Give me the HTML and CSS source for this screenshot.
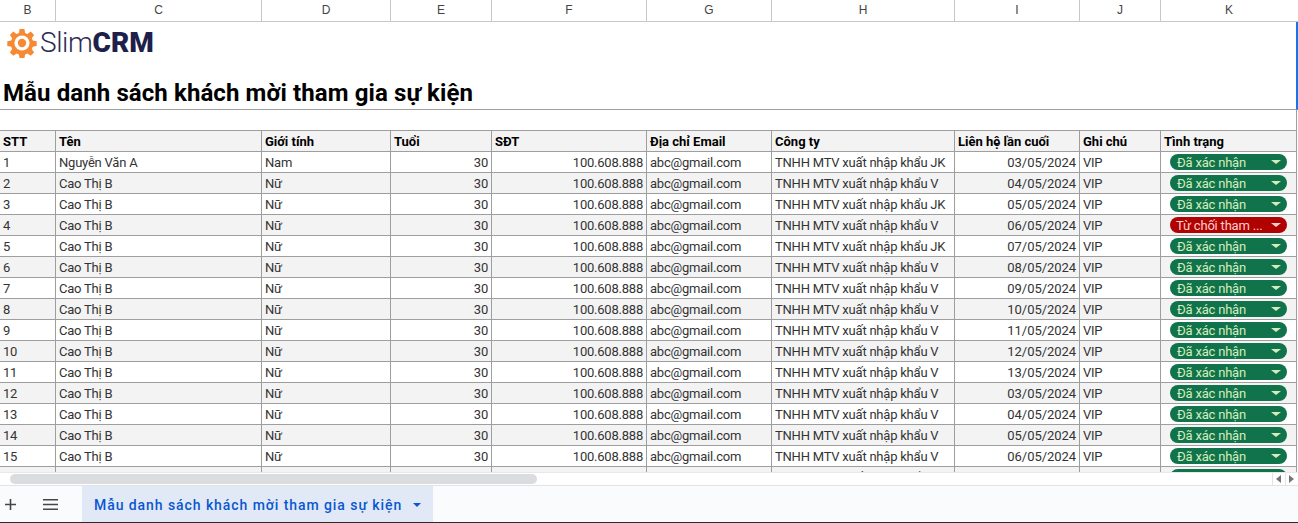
FILE: index.html
```html
<!DOCTYPE html>
<html lang="vi">
<head>
<meta charset="utf-8">
<title>Mẫu danh sách khách mời tham gia sự kiện</title>
<link rel="stylesheet" href="styles.css">
</head>
<body>
<div class="sheet">
  <div class="cols grid-row">
    <div>B</div><div>C</div><div>D</div><div>E</div><div>F</div><div>G</div><div>H</div><div>I</div><div>J</div><div>K</div>
  </div>
  <div class="body">
    <div class="banner">
      <div class="logo">
        <svg class="gear" width="30" height="30" viewBox="0 0 30 30"><path fill="#f58a33" d="M12.600 1h4.800l.7 3.900 2.300 1 3.300-2.300 3.400 3.400-2.300 3.300 1 2.300 3.900.7v4.800l-3.900.7-1 2.300 2.300 3.300-3.400 3.400-3.300-2.300-2.300 1-.7 3.900h-4.800l-.7-3.900-2.300-1-3.300 2.300-3.400-3.400 2.300-3.300-1-2.300-3.900-.7v-4.800l3.900-.7 1-2.300-2.300-3.300 3.400-3.400 3.300 2.300 2.300-1z"/><circle cx="15" cy="15" r="7.600" fill="#fff"/><circle cx="15" cy="15" r="4.200" fill="#f58a33"/></svg>
        <span class="brand">Slim<b>CRM</b></span>
      </div>
      <h1>Mẫu danh sách khách mời tham gia sự kiện</h1>
    </div>
    <div class="blank"></div>
    <div class="grid-row head">
      <div>STT</div><div>Tên</div><div>Giới tính</div><div>Tuổi</div><div>SĐT</div><div>Địa chỉ Email</div><div>Công ty</div><div>Liên hệ lần cuối</div><div>Ghi chú</div><div>Tình trạng</div>
    </div>
    <div class="grid-row data"><div>1</div><div>Nguyễn Văn A</div><div>Nam</div><div class="r">30</div><div class="r">100.608.888</div><div>abc@gmail.com</div><div>TNHH MTV xuất nhập khẩu JK</div><div class="r d">03/05/2024</div><div>VIP</div><div class="c"><span class="chip ok"><span class="lbl">Đã xác nhận</span><i></i></span></div></div>
    <div class="grid-row data"><div>2</div><div>Cao Thị B</div><div>Nữ</div><div class="r">30</div><div class="r">100.608.888</div><div>abc@gmail.com</div><div>TNHH MTV xuất nhập khẩu V</div><div class="r d">04/05/2024</div><div>VIP</div><div class="c"><span class="chip ok"><span class="lbl">Đã xác nhận</span><i></i></span></div></div>
    <div class="grid-row data"><div>3</div><div>Cao Thị B</div><div>Nữ</div><div class="r">30</div><div class="r">100.608.888</div><div>abc@gmail.com</div><div>TNHH MTV xuất nhập khẩu JK</div><div class="r d">05/05/2024</div><div>VIP</div><div class="c"><span class="chip ok"><span class="lbl">Đã xác nhận</span><i></i></span></div></div>
    <div class="grid-row data"><div>4</div><div>Cao Thị B</div><div>Nữ</div><div class="r">30</div><div class="r">100.608.888</div><div>abc@gmail.com</div><div>TNHH MTV xuất nhập khẩu V</div><div class="r d">06/05/2024</div><div>VIP</div><div class="c"><span class="chip no"><span class="lbl">Từ chối tham ...</span><i></i></span></div></div>
    <div class="grid-row data"><div>5</div><div>Cao Thị B</div><div>Nữ</div><div class="r">30</div><div class="r">100.608.888</div><div>abc@gmail.com</div><div>TNHH MTV xuất nhập khẩu JK</div><div class="r d">07/05/2024</div><div>VIP</div><div class="c"><span class="chip ok"><span class="lbl">Đã xác nhận</span><i></i></span></div></div>
    <div class="grid-row data"><div>6</div><div>Cao Thị B</div><div>Nữ</div><div class="r">30</div><div class="r">100.608.888</div><div>abc@gmail.com</div><div>TNHH MTV xuất nhập khẩu V</div><div class="r d">08/05/2024</div><div>VIP</div><div class="c"><span class="chip ok"><span class="lbl">Đã xác nhận</span><i></i></span></div></div>
    <div class="grid-row data"><div>7</div><div>Cao Thị B</div><div>Nữ</div><div class="r">30</div><div class="r">100.608.888</div><div>abc@gmail.com</div><div>TNHH MTV xuất nhập khẩu V</div><div class="r d">09/05/2024</div><div>VIP</div><div class="c"><span class="chip ok"><span class="lbl">Đã xác nhận</span><i></i></span></div></div>
    <div class="grid-row data"><div>8</div><div>Cao Thị B</div><div>Nữ</div><div class="r">30</div><div class="r">100.608.888</div><div>abc@gmail.com</div><div>TNHH MTV xuất nhập khẩu V</div><div class="r d">10/05/2024</div><div>VIP</div><div class="c"><span class="chip ok"><span class="lbl">Đã xác nhận</span><i></i></span></div></div>
    <div class="grid-row data"><div>9</div><div>Cao Thị B</div><div>Nữ</div><div class="r">30</div><div class="r">100.608.888</div><div>abc@gmail.com</div><div>TNHH MTV xuất nhập khẩu V</div><div class="r d">11/05/2024</div><div>VIP</div><div class="c"><span class="chip ok"><span class="lbl">Đã xác nhận</span><i></i></span></div></div>
    <div class="grid-row data"><div>10</div><div>Cao Thị B</div><div>Nữ</div><div class="r">30</div><div class="r">100.608.888</div><div>abc@gmail.com</div><div>TNHH MTV xuất nhập khẩu V</div><div class="r d">12/05/2024</div><div>VIP</div><div class="c"><span class="chip ok"><span class="lbl">Đã xác nhận</span><i></i></span></div></div>
    <div class="grid-row data"><div>11</div><div>Cao Thị B</div><div>Nữ</div><div class="r">30</div><div class="r">100.608.888</div><div>abc@gmail.com</div><div>TNHH MTV xuất nhập khẩu V</div><div class="r d">13/05/2024</div><div>VIP</div><div class="c"><span class="chip ok"><span class="lbl">Đã xác nhận</span><i></i></span></div></div>
    <div class="grid-row data"><div>12</div><div>Cao Thị B</div><div>Nữ</div><div class="r">30</div><div class="r">100.608.888</div><div>abc@gmail.com</div><div>TNHH MTV xuất nhập khẩu V</div><div class="r d">03/05/2024</div><div>VIP</div><div class="c"><span class="chip ok"><span class="lbl">Đã xác nhận</span><i></i></span></div></div>
    <div class="grid-row data"><div>13</div><div>Cao Thị B</div><div>Nữ</div><div class="r">30</div><div class="r">100.608.888</div><div>abc@gmail.com</div><div>TNHH MTV xuất nhập khẩu V</div><div class="r d">04/05/2024</div><div>VIP</div><div class="c"><span class="chip ok"><span class="lbl">Đã xác nhận</span><i></i></span></div></div>
    <div class="grid-row data"><div>14</div><div>Cao Thị B</div><div>Nữ</div><div class="r">30</div><div class="r">100.608.888</div><div>abc@gmail.com</div><div>TNHH MTV xuất nhập khẩu V</div><div class="r d">05/05/2024</div><div>VIP</div><div class="c"><span class="chip ok"><span class="lbl">Đã xác nhận</span><i></i></span></div></div>
    <div class="grid-row data"><div>15</div><div>Cao Thị B</div><div>Nữ</div><div class="r">30</div><div class="r">100.608.888</div><div>abc@gmail.com</div><div>TNHH MTV xuất nhập khẩu V</div><div class="r d">06/05/2024</div><div>VIP</div><div class="c"><span class="chip ok"><span class="lbl">Đã xác nhận</span><i></i></span></div></div>
    <div class="grid-row data"><div>16</div><div>Cao Thị B</div><div>Nữ</div><div class="r">30</div><div class="r">100.608.888</div><div>abc@gmail.com</div><div>TNHH MTV xuất nhập khẩu V</div><div class="r d">07/05/2024</div><div>VIP</div><div class="c"><span class="chip ok"><span class="lbl">Đã xác nhận</span><i></i></span></div></div>
  </div>
  <div class="hscroll">
    <div class="thumb"></div>
    <div class="arrows">
      <span class="arr"><svg width="6" height="8" viewBox="0 0 6 8"><path fill="#757575" d="M5 0v8L0 4z"/></svg></span>
      <span class="arr"><svg width="6" height="8" viewBox="0 0 6 8"><path fill="#757575" d="M0 0v8l5-4z"/></svg></span>
    </div>
  </div>
  <div class="tabs">
    <span class="plus"><svg width="11" height="11" viewBox="0 0 11 11"><path fill="#444746" d="M4.700 0h1.600v4.700H11v1.600H6.300V11H4.700V6.300H0V4.700h4.700z"/></svg></span>
    <span class="menu"><svg width="15" height="11" viewBox="0 0 15 11"><path fill="#444746" d="M0 0h15v1.500H0zM0 4.700h15v1.500H0zM0 9.400h15v1.500H0z"/></svg></span>
    <div class="tab"><span>Mẫu danh sách khách mời tham gia sự kiện</span><svg width="8" height="4" viewBox="0 0 8 4"><path fill="#0b57d0" d="M0 0h8L4 4z"/></svg></div>
  </div>
</div>
</body>
</html>
```
FILE: styles.css
```css
* { box-sizing: border-box; }
html, body { margin: 0; height: 100%; overflow: hidden; background: #fff; }
body { font-family: Roboto, "Liberation Sans", sans-serif; color: #333; }
.sheet { display: flex; flex-direction: column; width: 1298px; height: 523px; }
.grid-row {
  display: grid;
  grid-template-columns: 56px 206px 129px 101px 155px 125px 183px 125px 81px 136px;
  flex: none;
}
.cols { height: 22px; border-bottom: 1px solid #c7c7c7; color: #444; font: 12px/20px "Liberation Sans", sans-serif; text-align: center; }
.cols > div { border-right: 1px solid #c7c7c7; height: 21px; }
.cols > div:last-child { border-right: 0; }
.body { flex: none; height: 450px; overflow: hidden; }
.banner {
  height: 88px; border-bottom: 1px solid #9e9e9e; border-right: 2px solid #1a73e8;
  display: flex; flex-direction: column; justify-content: space-between;
}
.logo { display: flex; align-items: center; gap: 3px; padding: 6px 0 0 7px; height: 36px; }
.gear { flex: none; }
.brand { font-size: 28px; line-height: 30px; font-weight: 300; color: #2b2c55; letter-spacing: -.4px; }
.brand b { font-weight: 900; color: #1e1f4b; letter-spacing: .1px; }
h1 { margin: 0; padding: 0 0 0 3px; font-size: 24px; line-height: 32px; font-weight: 700; letter-spacing: .1px; color: #000; white-space: nowrap; }
.blank { height: 21px; width: 1297px; border-bottom: 1px solid #9e9e9e; border-right: 1px solid #9e9e9e; }
.head > div, .data > div {
  height: 21px; border-right: 1px solid #9e9e9e; border-bottom: 1px solid #9e9e9e;
  padding: 0 3px; font-size: 13px; line-height: 22px; white-space: nowrap; overflow: hidden;
  letter-spacing: -.22px;
}
.head > div { background: #f3f3f3; font-weight: 700; color: #000; letter-spacing: 0; }
.data:nth-of-type(odd) > div { background: #f3f3f3; }
.data > .r { text-align: right; }
.data > .d { letter-spacing: -.05px; }
.data > .c { padding: 2px 0 0 9px; }
.chip {
  display: flex; align-items: center; justify-content: space-between;
  width: 117px; height: 16px; border-radius: 8px; padding: 1px 6px 0 7px;
  font-size: 13px; line-height: 15px; letter-spacing: -.2px;
}
.no { padding-left: 6px; }
.chip i { width: 0; height: 0; border-style: solid; border-color: transparent; border-width: 4px 5px 0; margin-top: -1px; }
.ok { background: #11734b; color: #d4edbc; }
.ok i { border-top-color: #d4edbc; }
.no { background: #b10202; color: #ffcfc9; }
.no i { border-top-color: #ffcfc9; }
.hscroll {
  flex: none; height: 14px; background: #fff; border-top: 1px solid #e8e8e8; border-bottom: 1px solid #e3e3e3;
  display: flex; align-items: center; justify-content: space-between; padding-left: 10px;
}
.thumb { width: 527px; height: 10px; border-radius: 5px; background: #dadce0; }
.arrows { display: flex; }
.arr { width: 13px; height: 12px; border-left: 1px solid #e3e3e3; display: flex; align-items: center; justify-content: center; }
.tabs { flex: none; height: 37px; background: #f9fbfd; border-bottom: 1px solid #2a2a2a; display: flex; align-items: stretch; }
.plus { width: 21px; display: flex; align-items: center; justify-content: center; }
.menu { width: 61px; display: flex; align-items: center; justify-content: flex-start; padding-left: 22px; }
.tab {
  width: 351px; background: #e1e9f7; color: #0b57d0; display: flex; align-items: center; gap: 11px;
  padding: 2px 0 0 12px; font-size: 14px; font-weight: 500; letter-spacing: .93px; white-space: nowrap;
}
```
